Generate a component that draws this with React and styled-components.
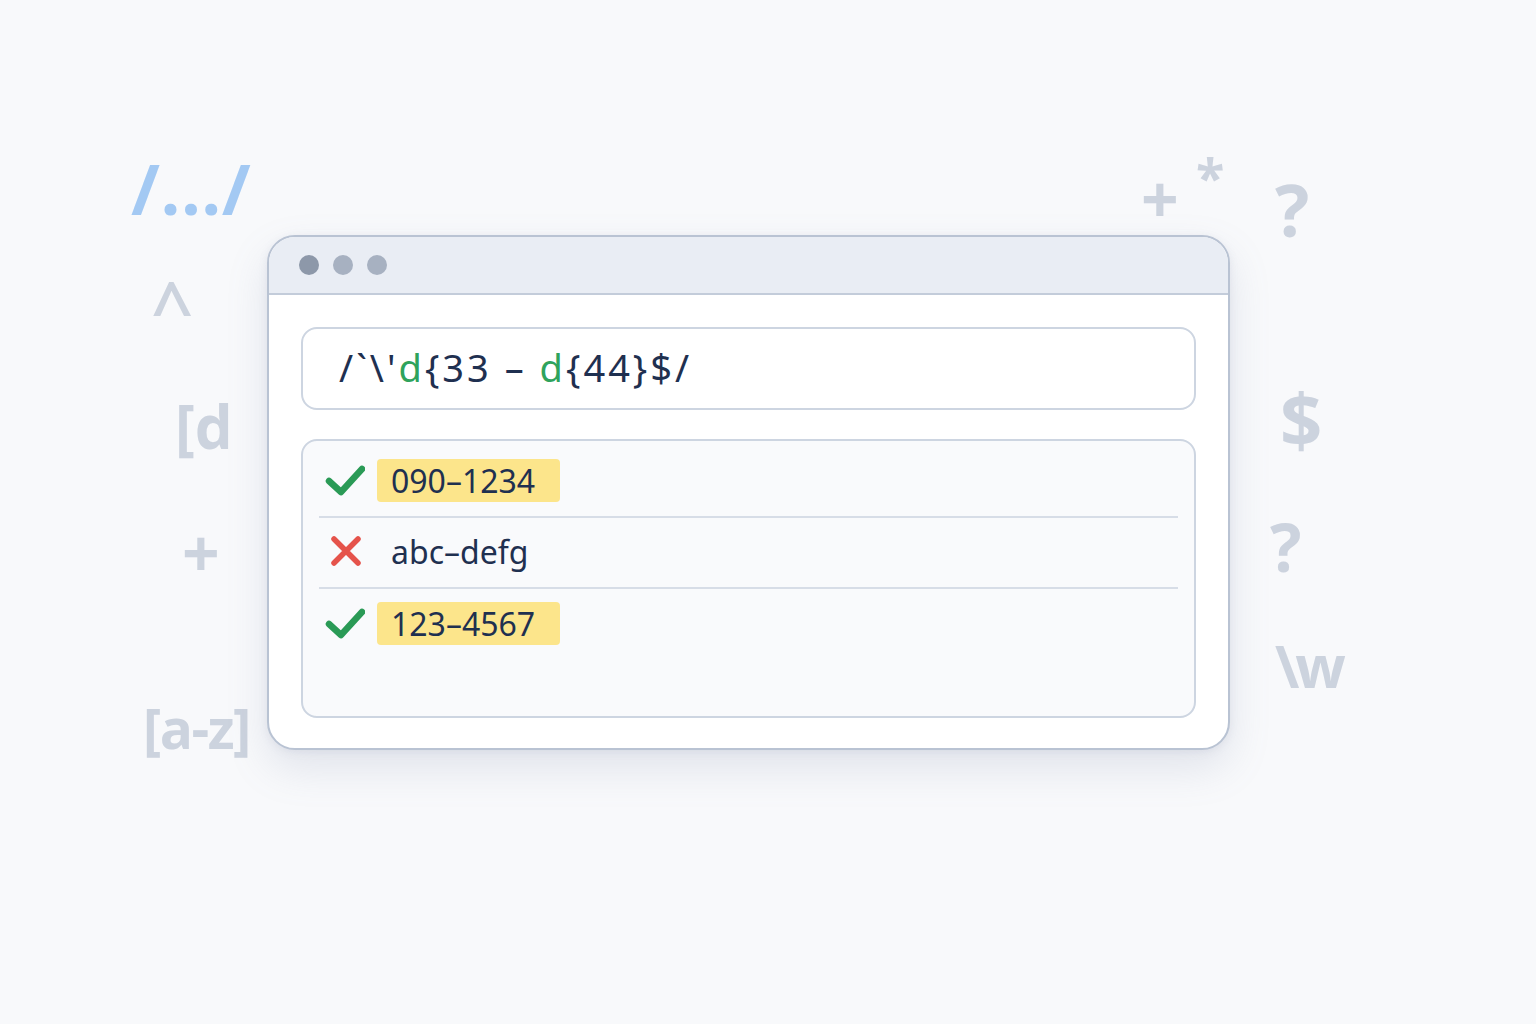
import styled, { createGlobalStyle } from 'styled-components';

const rows = [
    { id: 1, ok: true, text: '090–1234' },
    { id: 2, ok: false, text: 'abc–defg' },
    { id: 3, ok: true, text: '123–4567' },
];

const glyphs = [
    { id: 'slash', text: '/.../', x: 131, y: 153, size: 70, tone: 'blue', spacing: 0.5 },
    { id: 'caret', text: '^', x: 151, y: 270, size: 74, tone: 'grey', weight: 600 },
    { id: 'd', text: '[d', x: 175, y: 396, size: 60, tone: 'grey' },
    { id: 'plus1', text: '+', x: 182, y: 518, size: 66, tone: 'grey' },
    { id: 'az', text: '[a-z]', x: 143, y: 700, size: 55, tone: 'grey', spacing: -1.5 },
    { id: 'plus2', text: '+', x: 1141, y: 164, size: 66, tone: 'grey' },
    { id: 'star', text: '*', x: 1196, y: 151, size: 52, tone: 'grey' },
    { id: 'q1', text: '?', x: 1275, y: 173, size: 72, tone: 'grey' },
    { id: 'dollar', text: '$', x: 1280, y: 382, size: 74, tone: 'grey' },
    { id: 'q2', text: '?', x: 1270, y: 513, size: 66, tone: 'grey' },
    { id: 'w', text: '\\w', x: 1275, y: 636, size: 59, tone: 'grey', spacing: -4 },
];

function CheckIcon() {
    return (
        <svg width="40" height="32" viewBox="0 0 40 32">
            <path d="M4 17 L16 28 L37 5" fill="none" stroke="#2a9a56" strokeWidth="6.5" strokeLinecap="round" strokeLinejoin="round" />
        </svg>
    );
}

function CrossIcon() {
    return (
        <svg width="40" height="32" viewBox="0 0 40 32">
            <path d="M9 4 L33 28 M33 4 L9 28" fill="none" stroke="#e5534b" strokeWidth="5.5" strokeLinecap="round" />
        </svg>
    );
}

function App() {
    return (
        <>
            <GlobalStyle />
            <Page>
                {glyphs.map((g) => (
                    <Glyph
                        key={g.id}
                        $tone={g.tone}
                        $size={g.size}
                        $weight={g.weight}
                        $spacing={g.spacing}
                        style={{ left: g.x, top: g.y }}
                    >
                        {g.text}
                    </Glyph>
                ))}
                <Window>
                    <TitleBar>
                        <Dot $color="#8d98a9" />
                        <Dot $color="#a7b1c1" />
                        <Dot $color="#a7b1c1" />
                    </TitleBar>
                    <Body>
                        <RegexField>
                            /`\'<Token>d</Token>{'{'}33 – <Token>d</Token>{'{44}'}$/
                        </RegexField>
                        <Results>
                            {rows.map((row) => (
                                <Row key={row.id}>
                                    <IconCell>{row.ok ? <CheckIcon /> : <CrossIcon />}</IconCell>
                                    <Sample $match={row.ok}>{row.text}</Sample>
                                </Row>
                            ))}
                        </Results>
                    </Body>
                </Window>
            </Page>
        </>
    );
}

const GlobalStyle = createGlobalStyle`
    html, body {
        margin: 0;
        padding: 0;
        background: #f8f9fb;
    }
    body {
        font-family: "Noto Sans", "Open Sans", sans-serif;
    }
`;

const Page = styled.div`
    position: relative;
    width: 1536px;
    height: 1024px;
    overflow: hidden;
    background: #f8f9fb;
    padding: 235px 0 0 267px;
    box-sizing: border-box;
`;

const Glyph = styled.span`
    position: absolute;
    font-family: "Open Sans", "Noto Sans", sans-serif;
    font-weight: ${(p) => p.$weight || 700};
    font-size: ${(p) => p.$size}px;
    letter-spacing: ${(p) => p.$spacing || 0}px;
    line-height: 1;
    color: ${(p) => (p.$tone === 'blue' ? '#a3c9f3' : '#ccd3de')};
    white-space: nowrap;
    user-select: none;
`;

const Window = styled.div`
    position: relative;
    width: 963px;
    height: 515px;
    box-sizing: border-box;
    border: 2px solid #b9c3d3;
    border-radius: 28px;
    background: #ffffff;
    overflow: hidden;
    box-shadow: 0 18px 40px rgba(120, 135, 165, 0.18), 0 2px 8px rgba(120, 135, 165, 0.12);
`;

const TitleBar = styled.div`
    display: flex;
    align-items: center;
    gap: 14px;
    height: 56px;
    padding-left: 30px;
    background: #e9edf4;
    border-bottom: 2px solid #c3ccda;
`;

const Dot = styled.span`
    width: 20px;
    height: 20px;
    border-radius: 50%;
    background: ${(p) => p.$color};
`;

const Body = styled.div`
    display: flex;
    flex-direction: column;
    gap: 29px;
    padding: 32px 32px;
`;

const RegexField = styled.div`
    height: 83px;
    box-sizing: border-box;
    display: flex;
    align-items: center;
    padding: 0 0 4px 36px;
    border: 2px solid #cdd5e1;
    border-radius: 16px;
    background: #ffffff;
    font-family: "Noto Sans", sans-serif;
    font-size: 38px;
    letter-spacing: 3px;
    color: #1f3050;
    white-space: pre;
`;

const Token = styled.span`
    color: #2fa35c;
`;

const Results = styled.div`
    height: 279px;
    box-sizing: border-box;
    padding: 6px 16px 0;
    border: 2px solid #cdd5e1;
    border-radius: 16px;
    background: #f9fafc;
`;

const Row = styled.div`
    display: flex;
    align-items: center;
    gap: 12px;
    height: 71px;
    box-sizing: border-box;
    padding: 0 0 3px 6px;
    border-bottom: 2px solid #d7dde7;

    &:last-child {
        border-bottom: none;
    }
`;

const IconCell = styled.div`
    display: flex;
    align-items: center;
    justify-content: center;
    width: 40px;
`;

const Sample = styled.span`
    display: flex;
    align-items: center;
    width: 183px;
    height: 43px;
    box-sizing: border-box;
    padding-left: 14px;
    border-radius: 4px;
    background: ${(p) => (p.$match ? '#fce58b' : 'transparent')};
    font-family: "Noto Sans", sans-serif;
    font-size: 32px;
    color: #1f3050;
`;

export default App;
